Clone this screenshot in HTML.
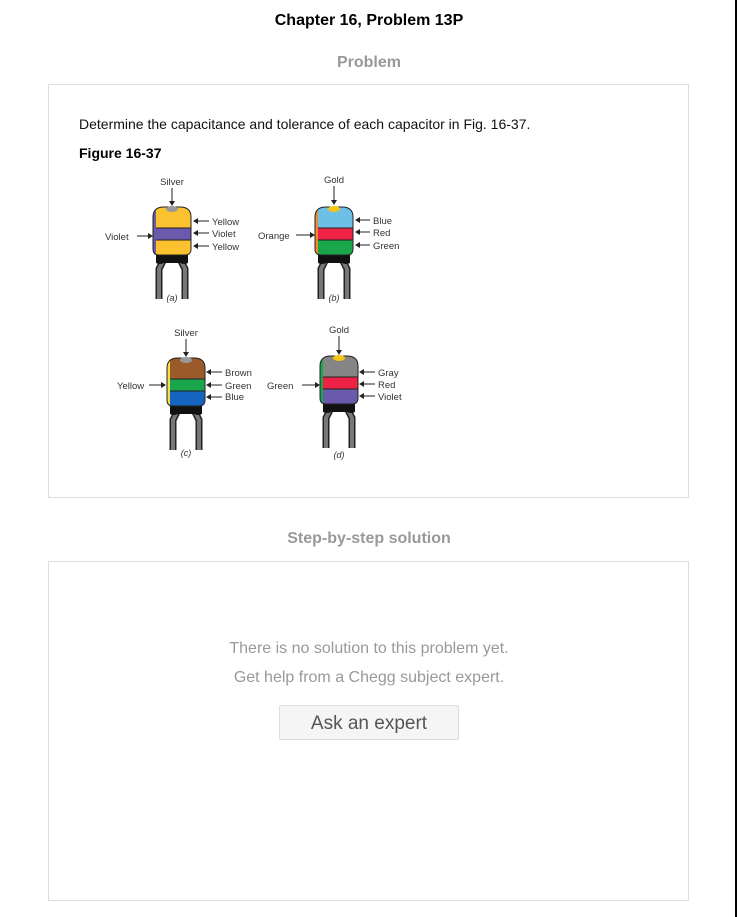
<!DOCTYPE html>
<html><head><meta charset="utf-8"><style>
html,body{margin:0;padding:0;background:#fff;width:738px;height:917px;overflow:hidden;position:relative;font-family:"Liberation Sans",Arial,sans-serif;}
.abs{position:absolute;}
h1{position:absolute;left:0;width:738px;top:12px;margin:0;text-align:center;font-size:16px;font-weight:bold;color:#000;}
.sec{position:absolute;left:0;width:738px;text-align:center;font-size:16px;font-weight:bold;color:#999;}
.box{position:absolute;left:48px;width:641px;border:1px solid #ddd;box-sizing:border-box;}
.vl{position:absolute;left:735px;top:0;width:2px;height:917px;background:#000;}
.msg{position:absolute;left:0;width:738px;text-align:center;font-size:16px;color:#999;}
.btn{position:absolute;left:279px;top:705px;width:180px;height:35px;box-sizing:border-box;border:1px solid #ddd;background:#f5f5f5;border-radius:2px;text-align:center;line-height:35px;font-size:19px;color:#555;}
</style></head><body>
<div class="vl"></div>
<h1>Chapter 16, Problem 13P</h1>
<div class="sec" style="top:54px">Problem</div>
<div class="box" style="top:84px;height:414px"></div>
<div class="abs" style="left:79px;top:116px;font-size:14px;color:#111">Determine the capacitance and tolerance of each capacitor in Fig. 16-37.</div>
<div class="abs" style="left:79px;top:145px;font-size:14px;font-weight:bold;color:#000">Figure 16-37</div>
<svg class="abs" style="left:0;top:0" width="738" height="500" xmlns="http://www.w3.org/2000/svg" font-family="Liberation Sans, Arial, sans-serif" font-size="9.5" fill="#333">
<defs>
<clipPath id="bc" clipPathUnits="userSpaceOnUse"><path d="M-19,10 Q-19,0 -8,0 L8,0 Q19,0 19,10 L19,42 Q19,48 13,48 L-13,48 Q-19,48 -19,42 Z"/></clipPath>
<g id="base">
<polyline points="-9,54 -13,62 -13,92" fill="none" stroke="#222" stroke-width="7"/>
<polyline points="-9,54 -13,62 -13,92" fill="none" stroke="#777" stroke-width="4"/>
<polyline points="9,54 13,62 13,92" fill="none" stroke="#222" stroke-width="7"/>
<polyline points="9,54 13,62 13,92" fill="none" stroke="#777" stroke-width="4"/>
<path d="M-16,46 L16,46 L16,56 Q12,58 8,56 L-8,56 Q-12,58 -16,56 Z" fill="#111"/>
</g>
<path id="ar" d="M0,0 L-5,-3 L-5,3 Z" fill="#222"/>
</defs>
<g transform="translate(172,207)">
<use href="#base"/>
<g clip-path="url(#bc)">
<rect x="-20" y="0" width="40" height="50" fill="#fcc12f"/>
<rect x="-20" y="21" width="40" height="12" fill="#6a5aab"/>
<line x1="-20" y1="21" x2="20" y2="21" stroke="#222"/><line x1="-20" y1="33" x2="20" y2="33" stroke="#222"/>
<rect x="-20" y="0" width="4" height="50" fill="#6a5aab"/>
</g>
<path d="M-19,10 Q-19,0 -8,0 L8,0 Q19,0 19,10 L19,42 Q19,48 13,48 L-13,48 Q-19,48 -19,42 Z" fill="none" stroke="#222"/>
<ellipse cx="0" cy="2" rx="6" ry="3" fill="#999"/>
</g>
<g transform="translate(334,207)">
<use href="#base"/>
<g clip-path="url(#bc)">
<rect x="-20" y="0" width="40" height="50" fill="#6cc0e5"/>
<rect x="-20" y="21" width="40" height="12" fill="#ee2244"/>
<rect x="-20" y="33" width="40" height="17" fill="#1aa64a"/>
<line x1="-20" y1="21" x2="20" y2="21" stroke="#222"/><line x1="-20" y1="33" x2="20" y2="33" stroke="#222"/>
<rect x="-20" y="0" width="4" height="50" fill="#f08a2a"/>
</g>
<path d="M-19,10 Q-19,0 -8,0 L8,0 Q19,0 19,10 L19,42 Q19,48 13,48 L-13,48 Q-19,48 -19,42 Z" fill="none" stroke="#222"/>
<ellipse cx="0" cy="2" rx="6" ry="3" fill="#f5c518"/>
</g>
<g transform="translate(186,358)">
<use href="#base"/>
<g clip-path="url(#bc)">
<rect x="-20" y="0" width="40" height="50" fill="#9a5a2a"/>
<rect x="-20" y="21" width="40" height="12" fill="#1aa64a"/>
<rect x="-20" y="33" width="40" height="17" fill="#1565c0"/>
<line x1="-20" y1="21" x2="20" y2="21" stroke="#222"/><line x1="-20" y1="33" x2="20" y2="33" stroke="#222"/>
<rect x="-20" y="0" width="4" height="50" fill="#f5e04a"/>
</g>
<path d="M-19,10 Q-19,0 -8,0 L8,0 Q19,0 19,10 L19,42 Q19,48 13,48 L-13,48 Q-19,48 -19,42 Z" fill="none" stroke="#222"/>
<ellipse cx="0" cy="2" rx="6" ry="3" fill="#999"/>
</g>
<g transform="translate(339,356)">
<use href="#base"/>
<g clip-path="url(#bc)">
<rect x="-20" y="0" width="40" height="50" fill="#858585"/>
<rect x="-20" y="21" width="40" height="12" fill="#ee2244"/>
<rect x="-20" y="33" width="40" height="17" fill="#6a5aab"/>
<line x1="-20" y1="21" x2="20" y2="21" stroke="#222"/><line x1="-20" y1="33" x2="20" y2="33" stroke="#222"/>
<rect x="-20" y="0" width="4" height="50" fill="#1aa64a"/>
</g>
<path d="M-19,10 Q-19,0 -8,0 L8,0 Q19,0 19,10 L19,42 Q19,48 13,48 L-13,48 Q-19,48 -19,42 Z" fill="none" stroke="#222"/>
<ellipse cx="0" cy="2" rx="6" ry="3" fill="#f5c518"/>
</g>
<g stroke="#222" stroke-width="1">
<line x1="172" y1="188" x2="172" y2="203"/>
<line x1="137" y1="236" x2="150" y2="236"/>
<line x1="195" y1="221" x2="209" y2="221"/><line x1="195" y1="233" x2="209" y2="233"/><line x1="195" y1="246" x2="209" y2="246"/>
<line x1="334" y1="186" x2="334" y2="202"/>
<line x1="296" y1="235" x2="312" y2="235"/>
<line x1="356" y1="220" x2="370" y2="220"/><line x1="356" y1="232" x2="370" y2="232"/><line x1="356" y1="245" x2="370" y2="245"/>
<line x1="186" y1="339" x2="186" y2="354"/>
<line x1="149" y1="385" x2="162" y2="385"/>
<line x1="208" y1="372" x2="222" y2="372"/><line x1="208" y1="385" x2="222" y2="385"/><line x1="208" y1="397" x2="222" y2="397"/>
<line x1="339" y1="336" x2="339" y2="352"/>
<line x1="302" y1="385" x2="316" y2="385"/>
<line x1="360" y1="372" x2="375" y2="372"/><line x1="360" y1="384" x2="375" y2="384"/><line x1="360" y1="396" x2="375" y2="396"/>
</g>
<g fill="#222">
<use href="#ar" transform="translate(172,206) rotate(90)"/>
<use href="#ar" transform="translate(153,236)"/>
<use href="#ar" transform="translate(193,221) rotate(180)"/><use href="#ar" transform="translate(193,233) rotate(180)"/><use href="#ar" transform="translate(193,246) rotate(180)"/>
<use href="#ar" transform="translate(334,205) rotate(90)"/>
<use href="#ar" transform="translate(315,235)"/>
<use href="#ar" transform="translate(355,220) rotate(180)"/><use href="#ar" transform="translate(355,232) rotate(180)"/><use href="#ar" transform="translate(355,245) rotate(180)"/>
<use href="#ar" transform="translate(186,357) rotate(90)"/>
<use href="#ar" transform="translate(166,385)"/>
<use href="#ar" transform="translate(206,372) rotate(180)"/><use href="#ar" transform="translate(206,385) rotate(180)"/><use href="#ar" transform="translate(206,397) rotate(180)"/>
<use href="#ar" transform="translate(339,355) rotate(90)"/>
<use href="#ar" transform="translate(320,385)"/>
<use href="#ar" transform="translate(359,372) rotate(180)"/><use href="#ar" transform="translate(359,384) rotate(180)"/><use href="#ar" transform="translate(359,396) rotate(180)"/>
</g>
<text x="172" y="185" text-anchor="middle">Silver</text>
<text x="105" y="240">Violet</text>
<text x="212" y="225">Yellow</text><text x="212" y="237">Violet</text><text x="212" y="250">Yellow</text>
<text x="172" y="301" text-anchor="middle" font-style="italic" font-size="9">(a)</text>
<text x="334" y="183" text-anchor="middle">Gold</text>
<text x="258" y="239">Orange</text>
<text x="373" y="224">Blue</text><text x="373" y="236">Red</text><text x="373" y="249">Green</text>
<text x="334" y="301" text-anchor="middle" font-style="italic" font-size="9">(b)</text>
<text x="186" y="336" text-anchor="middle">Silver</text>
<text x="117" y="389">Yellow</text>
<text x="225" y="376">Brown</text><text x="225" y="389">Green</text><text x="225" y="400">Blue</text>
<text x="186" y="456" text-anchor="middle" font-style="italic" font-size="9">(c)</text>
<text x="339" y="333" text-anchor="middle">Gold</text>
<text x="267" y="389">Green</text>
<text x="378" y="376">Gray</text><text x="378" y="388">Red</text><text x="378" y="400">Violet</text>
<text x="339" y="458" text-anchor="middle" font-style="italic" font-size="9">(d)</text>
</svg>
<div class="sec" style="top:530px">Step-by-step solution</div>
<div class="box" style="top:561px;height:340px"></div>
<div class="msg" style="top:640px">There is no solution to this problem yet.</div>
<div class="msg" style="top:669px">Get help from a Chegg subject expert.</div>
<div class="btn">Ask an expert</div>
</body></html>
